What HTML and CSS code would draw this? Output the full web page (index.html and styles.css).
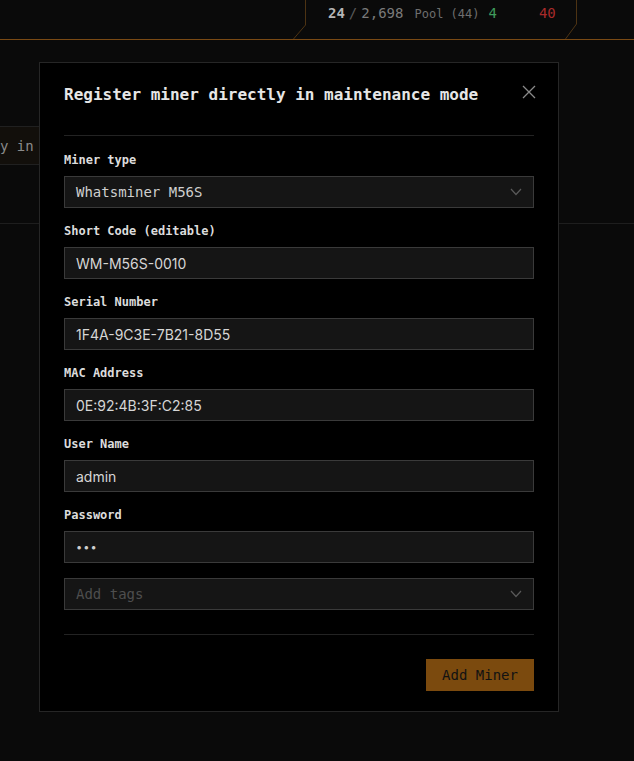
FILE: index.html
```html
<!DOCTYPE html>
<html lang="en">
<head>
<meta charset="utf-8">
<title>Register miner</title>
<link rel="stylesheet" href="styles.css">
</head>
<body>
<header class="topbar">
  <div class="stats">
    <svg class="stats-frame" width="285" height="40" viewBox="0 0 285 40" aria-hidden="true">
      <path d="M12.5 0 V25 L0.5 39" fill="none" stroke="#4d3313" stroke-width="1"/>
      <path d="M283.5 0 V24 L272.5 39" fill="none" stroke="#4d3313" stroke-width="1"/>
    </svg>
    <span class="stat-cur">24</span><span class="stat-sep">/</span><span class="stat-total">2,698</span>
    <span class="stat-pool">Pool (44)</span>
    <span class="stat-ok">4</span>
    <span class="stat-bad">40</span>
  </div>
</header>
<main class="page">
  <div class="spacer"></div>
  <div class="row row-active"><span class="row-text">y in</span></div>
  <div class="row row-tall"></div>
</main>

<div class="modal" role="dialog" aria-labelledby="modal-title">
  <div class="modal-head">
    <h2 id="modal-title" class="modal-title">Register miner directly in maintenance mode</h2>
    <button class="close" aria-label="Close">
      <svg width="14" height="14" viewBox="0 0 14 14"><path d="M1 1 L13 13 M13 1 L1 13" stroke="#8a8a8a" stroke-width="1.3" fill="none"/></svg>
    </button>
  </div>
  <form class="form">
    <div class="field">
      <label class="label">Miner type</label>
      <div class="input select mono">Whatsminer M56S
        <svg class="chev" width="12" height="8" viewBox="0 0 12 8"><path d="M1 1 L6 6.5 L11 1" stroke="#5a5a5a" stroke-width="1.2" fill="none"/></svg>
      </div>
    </div>
    <div class="field">
      <label class="label">Short Code (editable)</label>
      <div class="input sans">WM-M56S-0010</div>
    </div>
    <div class="field">
      <label class="label">Serial Number</label>
      <div class="input sans">1F4A-9C3E-7B21-8D55</div>
    </div>
    <div class="field">
      <label class="label">MAC Address</label>
      <div class="input sans">0E:92:4B:3F:C2:85</div>
    </div>
    <div class="field">
      <label class="label">User Name</label>
      <div class="input sans">admin</div>
    </div>
    <div class="field">
      <label class="label">Password</label>
      <div class="input pw">•••</div>
    </div>
    <div class="input select mono placeholder">Add tags
      <svg class="chev" width="12" height="8" viewBox="0 0 12 8"><path d="M1 1 L6 6.5 L11 1" stroke="#5a5a5a" stroke-width="1.2" fill="none"/></svg>
    </div>
  </form>
  <div class="modal-foot">
    <button class="btn-primary">Add Miner</button>
  </div>
</div>
</body>
</html>
```

FILE: styles.css
```css
* { box-sizing: border-box; }
html, body { margin: 0; padding: 0; }
body {
  background: #0a0a0a;
  width: 634px;
  height: 761px;
  overflow: hidden;
  font-family: "DejaVu Sans Mono", "Liberation Mono", monospace;
  color: #ccc;
}
.topbar {
  height: 40px;
  border-bottom: 1px solid #7a4a14;
  display: flex;
  justify-content: flex-start;
}
.stats {
  position: relative;
  margin-left: 293px;
  width: 285px;
  height: 39px;
  padding: 5px 0 0 35px;
  display: flex;
  align-items: baseline;
  line-height: 16px;
  font-size: 14px;
}
.stats-frame { position: absolute; left: 0; top: 0; }
.stat-cur { color: #b5b5b5; font-weight: bold; }
.stat-sep { color: #5a5a5a; margin: 0 4px; }
.stat-total { color: #7a7a7a; }
.stat-pool { color: #6e6e6e; font-size: 12px; margin-left: 11px; }
.stat-ok { color: #3f9a5c; margin-left: 9px; }
.stat-bad { color: #a82a2a; margin-left: 42px; }

.page { display: flex; flex-direction: column; }
.spacer { height: 86px; }
.row {
  border-top: 1px solid #202020;
  height: 39px;
}
.row-active {
  width: 40px;
  background: #120f0b;
  border-bottom: 1px solid #202020;
  display: flex;
  align-items: center;
  white-space: nowrap;
}
.row-text {
  font-size: 14px;
  color: #8a8a8a;
}
.row-tall { border-top: 0; height: 59px; border-bottom: 1px solid #1e1e1e; }

.modal {
  position: fixed;
  left: 39px;
  top: 62px;
  width: 520px;
  background: #000;
  border: 1px solid #262626;
  padding: 0 24px 20px;
}
.modal-head {
  display: flex;
  justify-content: space-between;
  align-items: flex-start;
  padding: 22px 0 30px;
  border-bottom: 1px solid #232323;
}
.modal-title {
  margin: 0;
  font-size: 16px;
  line-height: 20px;
  font-weight: bold;
  color: #e6e6e6;
}
.close {
  background: none;
  border: 0;
  padding: 0;
  margin: 0 -2px 0 0;
  width: 14px;
  height: 14px;
  display: flex;
  cursor: pointer;
}
.form {
  display: flex;
  flex-direction: column;
  gap: 15px;
  padding: 16px 0 24px;
  border-bottom: 1px solid #232323;
}
.field { display: flex; flex-direction: column; gap: 8px; }
.label {
  font-size: 12px;
  line-height: 16px;
  font-weight: bold;
  color: #dcdcdc;
}
.input {
  height: 32px;
  border: 1px solid #3a3a3a;
  background: #151515;
  padding: 0 11px;
  display: flex;
  align-items: center;
  font-size: 14px;
  color: #cfcfcf;
}
.mono { font-family: "DejaVu Sans Mono", "Liberation Mono", monospace; }
.sans { font-family: Inter, "Noto Sans", sans-serif; color: #d6d6d6; }
.pw { font-family: Inter, sans-serif; font-size: 11px; letter-spacing: 1px; color: #cfcfcf; }
.select { justify-content: space-between; }
.placeholder { color: #4e4e4e; }
.modal-foot {
  display: flex;
  justify-content: flex-end;
  padding-top: 24px;
}
.btn-primary {
  height: 32px;
  width: 108px;
  border: 0;
  background: #7b4a0e;
  color: #121212;
  font-family: "DejaVu Sans Mono", "Liberation Mono", monospace;
  font-size: 14px;
  padding: 0;
  cursor: pointer;
}
```
